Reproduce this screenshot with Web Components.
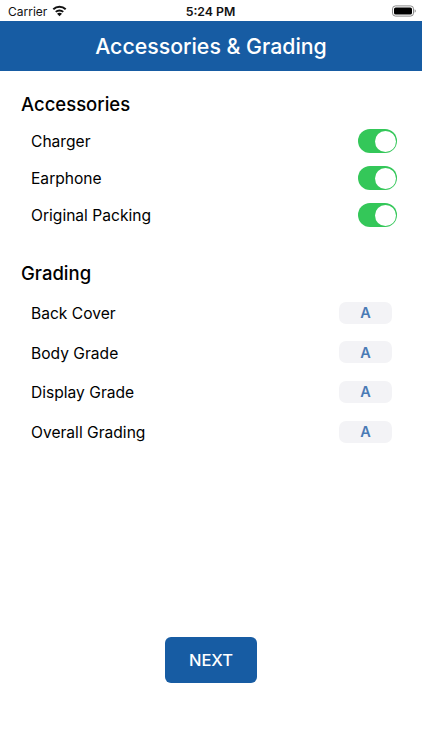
<!DOCTYPE html>
<html>
<head>
<meta charset="utf-8">
<title>Accessories & Grading</title>
<style>
  html, body { margin: 0; padding: 0; background: #fff; }
  body { font-family: Inter, "Liberation Sans", sans-serif; color: #000; }
</style>
</head>
<body>
<grading-screen></grading-screen>
<script>
class StatusBar extends HTMLElement {
  constructor() {
    super();
    this.attachShadow({ mode: 'open' });
    this.shadowRoot.innerHTML = `
      <style>
        :host { display: grid; grid-template-columns: 1fr auto 1fr; align-items: center; height: 21px; padding: 1px 8px 0; box-sizing: border-box; font-size: 12px; color: #111; }
        .left { display: flex; align-items: center; gap: 5px; }
        .time { font-weight: 600; font-size: 12.3px; margin-left: -1px; }
        .right { display: flex; justify-content: flex-end; margin-right: -2px; }
        svg { display: block; }
      </style>
      <div class="left">
        <span>Carrier</span>
        <svg width="15" height="12" viewBox="0 0 15 12" style="margin-top:-1px">
          <path d="M1.300 4.300C3 2.700 5.100 1.800 7.500 1.800s4.500.9 6.200 2.500" fill="none" stroke="#111" stroke-width="2"/>
          <path d="M3.800 6.900c1-1 2.300-1.500 3.700-1.500s2.700.5 3.700 1.500" fill="none" stroke="#111" stroke-width="2"/>
          <path d="M5 8.700c.7-.6 1.500-.9 2.500-.9s1.800.3 2.500.9L7.500 11.300z" fill="#111"/>
        </svg>
      </div>
      <span class="time">5:24 PM</span>
      <div class="right">
        <svg width="24" height="12" viewBox="0 0 24 12">
          <rect x="0.500" y="0.900" width="21" height="10.200" rx="3" fill="none" stroke="#8a8a8a" stroke-width="1"/>
          <rect x="2" y="2.400" width="18" height="7.200" rx="1.700" fill="#000"/>
          <path d="M22.600 4.300c.8.300 1.200.9 1.200 1.700s-.4 1.400-1.200 1.700z" fill="#8a8a8a"/>
        </svg>
      </div>`;
  }
}

class NavBar extends HTMLElement {
  constructor() {
    super();
    this.attachShadow({ mode: 'open' });
    this.shadowRoot.innerHTML = `
      <style>
        :host { display: flex; align-items: center; justify-content: center; height: 50px; background: #175ca3; color: #fff; font-size: 21.300px; font-weight: 500; box-sizing: border-box; }
      </style>
      <slot></slot>`;
  }
}

class SectionList extends HTMLElement {
  constructor() {
    super();
    this.attachShadow({ mode: 'open' });
    this.shadowRoot.innerHTML = `
      <style>
        :host { display: block; padding: 0 25px 0 21px; }
        h2 { margin: 0; font-size: 18.500px; font-weight: 500; line-height: 24px; }
        .rows { display: flex; flex-direction: column; padding-left: 10px; }
      </style>
      <h2>${this.getAttribute('title')}</h2>
      <div class="rows"><slot></slot></div>`;
  }
}

class ToggleRow extends HTMLElement {
  constructor() {
    super();
    this.attachShadow({ mode: 'open' });
    this.shadowRoot.innerHTML = `
      <style>
        :host { display: flex; align-items: center; justify-content: space-between; height: 37px; font-size: 15.600px; }
        span { padding-top: 1px; }
        .track { width: 39px; height: 24px; border-radius: 12px; background: #34c759; position: relative; }
        .knob { position: absolute; top: 1.500px; right: 1.500px; width: 21px; height: 21px; border-radius: 50%; background: #fff; }
      </style>
      <span><slot></slot></span>
      <div class="track"><div class="knob"></div></div>`;
  }
}

class GradeRow extends HTMLElement {
  constructor() {
    super();
    this.attachShadow({ mode: 'open' });
    this.shadowRoot.innerHTML = `
      <style>
        :host { display: flex; align-items: center; justify-content: space-between; height: 39.600px; font-size: 15.600px; padding-right: 5px; }
        span { padding-top: 2px; }
        .pill { width: 53px; height: 22px; border-radius: 7px; background: #f3f3f6; color: #4a7ab5; font-size: 14.500px; font-weight: 600; display: flex; align-items: center; justify-content: center; }
      </style>
      <span><slot></slot></span>
      <div class="pill">${this.getAttribute('grade')}</div>`;
  }
}

class NextButton extends HTMLElement {
  constructor() {
    super();
    this.attachShadow({ mode: 'open' });
    this.shadowRoot.innerHTML = `
      <style>
        :host { display: flex; align-items: center; justify-content: center; width: 92px; height: 46px; border-radius: 6px; background: #175ca3; color: #fff; font-size: 16.500px; font-weight: 500; }
      </style>
      <slot></slot>`;
  }
}

class GradingScreen extends HTMLElement {
  constructor() {
    super();
    this.attachShadow({ mode: 'open' });
    this.shadowRoot.innerHTML = `
      <style>
        :host { display: flex; flex-direction: column; height: 750px; overflow: hidden; }
        main { flex: 1; display: flex; flex-direction: column; padding-top: 21px; }
        .grading { margin-top: 27.500px; }
        .gap-a { height: 6.500px; }
        .gap-b { height: 8px; }
        footer { margin-top: auto; display: flex; justify-content: center; padding-bottom: 67px; }
      </style>
      <status-bar></status-bar>
      <nav-bar>Accessories &amp; Grading</nav-bar>
      <main>
        <section-list title="Accessories">
          <div class="gap-a"></div>
          <toggle-row>Charger</toggle-row>
          <toggle-row>Earphone</toggle-row>
          <toggle-row>Original Packing</toggle-row>
        </section-list>
        <section-list class="grading" title="Grading">
          <div class="gap-b"></div>
          <grade-row grade="A">Back Cover</grade-row>
          <grade-row grade="A">Body Grade</grade-row>
          <grade-row grade="A">Display Grade</grade-row>
          <grade-row grade="A">Overall Grading</grade-row>
        </section-list>
        <footer><next-button>NEXT</next-button></footer>
      </main>`;
  }
}

customElements.define('status-bar', StatusBar);
customElements.define('nav-bar', NavBar);
customElements.define('section-list', SectionList);
customElements.define('toggle-row', ToggleRow);
customElements.define('grade-row', GradeRow);
customElements.define('next-button', NextButton);
customElements.define('grading-screen', GradingScreen);
</script>
</body>
</html>
